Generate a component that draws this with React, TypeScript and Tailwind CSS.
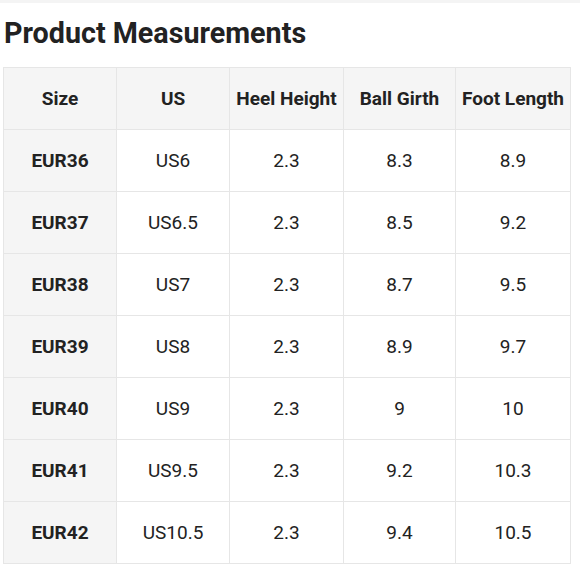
import React from "react";

const rows = [
  ["EUR36", "US6", "2.3", "8.3", "8.9"],
  ["EUR37", "US6.5", "2.3", "8.5", "9.2"],
  ["EUR38", "US7", "2.3", "8.7", "9.5"],
  ["EUR39", "US8", "2.3", "8.9", "9.7"],
  ["EUR40", "US9", "2.3", "9", "10"],
  ["EUR41", "US9.5", "2.3", "9.2", "10.3"],
  ["EUR42", "US10.5", "2.3", "9.4", "10.5"],
];

const headers = ["Size", "US", "Heel Height", "Ball Girth", "Foot Length"];

export default function App() {
  return (
    <div className="w-[580px] h-[580px] bg-white overflow-hidden text-[#222]" style={{ fontFamily: "Roboto, 'Liberation Sans', sans-serif" }}>
      <div className="h-[3px] bg-[#f4f4f4]" />
      <h1 className="pl-[4px] pt-[12px] h-[64px] text-[28.7px] font-bold leading-[36px]">Product Measurements</h1>
      <table className="ml-[3px] w-[567px] border-collapse table-fixed">
        <colgroup>
          <col className="w-[113px]" />
          <col className="w-[113px]" />
          <col className="w-[114px]" />
          <col className="w-[112px]" />
          <col className="w-[115px]" />
        </colgroup>
        <thead>
          <tr className="h-[62px] bg-[#f5f5f5]">
            {headers.map((h) => (
              <th key={h} className="border border-[#e6e6e6] text-[19px] font-bold text-center p-0 pt-[2px] whitespace-nowrap">
                {h}
              </th>
            ))}
          </tr>
        </thead>
        <tbody>
          {rows.map((r) => (
            <tr key={r[0]} className="h-[62px]">
              {r.map((c, i) => (
                <td
                  key={i}
                  className={
                    i === 0
                      ? "border border-[#e6e6e6] bg-[#f5f5f5] text-[19px] font-bold text-center p-0 pt-[1px]"
                      : "border border-[#e6e6e6] bg-white text-[19px] text-center p-0 pt-[1px]"
                  }
                >
                  {c}
                </td>
              ))}
            </tr>
          ))}
        </tbody>
      </table>
    </div>
  );
}
